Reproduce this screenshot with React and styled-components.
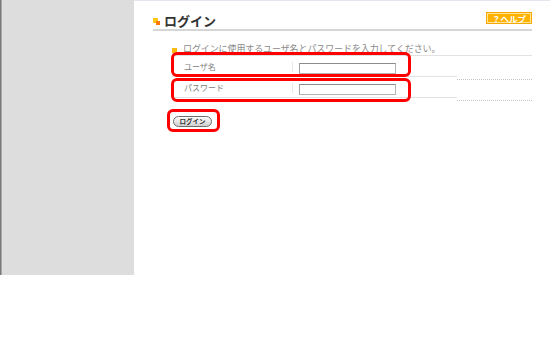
import React from "react";
import styled, { createGlobalStyle } from "styled-components";

const GlobalStyle = createGlobalStyle`
  html, body { margin: 0; padding: 0; background: #ffffff; }
  body { font-family: "Noto Sans CJK JP", "Noto Sans", sans-serif; }
  * { box-sizing: border-box; }
`;

const Page = styled.div`
  display: flex;
  width: 550px;
  height: 275px;
`;

const Sidebar = styled.aside`
  width: 134px;
  flex: 0 0 134px;
  background: #dddddd;
  border-left: 1px solid #7a7a7a;
  box-shadow: inset 1px 0 0 #a8a8a8;
`;

const Main = styled.main`
  flex: 1;
  border-top: 1px solid #e4e4ec;
  padding: 0 18px 0 19px;
`;

const HeaderRow = styled.div`
  display: flex;
  justify-content: space-between;
  align-items: flex-start;
  padding-top: 11px;
  border-bottom: 2px solid #d6d6d6;
`;

const Title = styled.h1`
  display: flex;
  align-items: center;
  gap: 4px;
  margin: 1px 0 0 0;
  height: 16px;
  line-height: 16px;
  font-size: 13px;
  font-weight: bold;
  color: #333333;
`;

const TitleIcon = styled.span`
  position: relative;
  width: 7px;
  height: 7px;
  margin-top: 1px;
  &::before {
    content: "";
    position: absolute;
    left: 0;
    top: 0;
    width: 5px;
    height: 5px;
    background: #ffc61a;
  }
  &::after {
    content: "";
    position: absolute;
    right: 0;
    bottom: 0;
    width: 4px;
    height: 4px;
    background: #ff7a00;
  }
`;

const HelpButton = styled.span`
  display: flex;
  align-items: center;
  justify-content: center;
  width: 46px;
  height: 12px;
  background: #ffb300;
  border: 1px solid #f5a800;
  box-shadow: inset 0 0 0 1px #ffe59a;
  color: #ffffff;
  font-size: 8.5px;
  font-weight: bold;
  line-height: 1;
`;

const Section = styled.section`
  padding-left: 19px;
  padding-top: 13px;
`;

const Lead = styled.p`
  display: flex;
  align-items: center;
  margin: 0;
  height: 10px;
  line-height: 10px;
  font-size: 9px;
  letter-spacing: -0.1px;
  color: #8a8a8a;
`;

const Bullet = styled.span`
  width: 5px;
  height: 5px;
  margin-right: 6px;
  margin-top: 2px;
  background: #f7bb14;
`;

const FormTable = styled.div`
  margin-top: 1px;
  border-top: 1px solid #e2e2e2;
`;

const Row = styled.div`
  position: relative;
  display: grid;
  grid-template-columns: 120px 165px 75px;
  height: 21px;
`;

const LabelCell = styled.div`
  display: flex;
  align-items: center;
  padding-left: 12px;
  font-size: 8px;
  color: #808080;
  border-bottom: 1px solid #e2e2e2;
`;

const InputCell = styled.div`
  display: flex;
  align-items: flex-start;
  gap: 6px;
  padding-top: 6px;
  border-bottom: 1px solid #e2e2e2;
`;

const Divider = styled.span`
  width: 1px;
  height: 10px;
  background: #e8e8e8;
`;

const TextInput = styled.input`
  width: 97px;
  height: 11px;
  margin: 1px 0 0 0;
  padding: 0;
  border: 1px solid #b4b4b4;
  border-top-color: #8c8c8c;
  border-left-color: #a0a0a0;
  background: #ffffff;
  outline: none;
`;

const ExtraCell = styled.div`
  border-bottom: 1px dotted #c4c4c4;
  margin-bottom: -3px;
`;

const Highlight = styled.span`
  position: absolute;
  left: ${(p) => p.$left}px;
  top: ${(p) => p.$top}px;
  width: ${(p) => p.$width}px;
  height: ${(p) => p.$height}px;
  border: 3px solid #ff0000;
  border-radius: 6px;
  pointer-events: none;
`;

const ButtonWrap = styled.div`
  position: relative;
  display: inline-flex;
  margin-top: 18px;
  margin-left: 1px;
`;

const LoginButton = styled.button`
  width: 39px;
  height: 11px;
  padding: 0;
  border: 1px solid #6e6e6e;
  border-radius: 6px;
  background: linear-gradient(#fdfdfd, #cfcfcf);
  color: #333333;
  font-family: "Noto Sans CJK JP", "Noto Sans", sans-serif;
  font-size: 6.5px;
  font-weight: bold;
  line-height: 9px;
`;

const fields = [
  { label: "ユーザ名", type: "text", hl: { top: -4, height: 25 } },
  { label: "パスワード", type: "password", hl: { top: 1, height: 24 } },
];

export default function App() {
  return (
    <>
      <GlobalStyle />
      <Page>
        <Sidebar />
        <Main>
          <HeaderRow>
            <Title>
              <TitleIcon />
              ログイン
            </Title>
            <HelpButton>？ヘルプ</HelpButton>
          </HeaderRow>
          <Section>
            <Lead>
              <Bullet />
              ログインに使用するユーザ名とパスワードを入力してください。
            </Lead>
            <FormTable>
              {fields.map((f) => (
                <Row key={f.label}>
                  <LabelCell>{f.label}</LabelCell>
                  <InputCell>
                    <Divider />
                    <TextInput type={f.type} />
                  </InputCell>
                  <ExtraCell />
                  <Highlight $left={-1} $top={f.hl.top} $width={240} $height={f.hl.height} />
                </Row>
              ))}
            </FormTable>
            <ButtonWrap>
              <LoginButton>ログイン</LoginButton>
              <Highlight $left={-6} $top={-7} $width={53} $height={23} />
            </ButtonWrap>
          </Section>
        </Main>
      </Page>
    </>
  );
}
